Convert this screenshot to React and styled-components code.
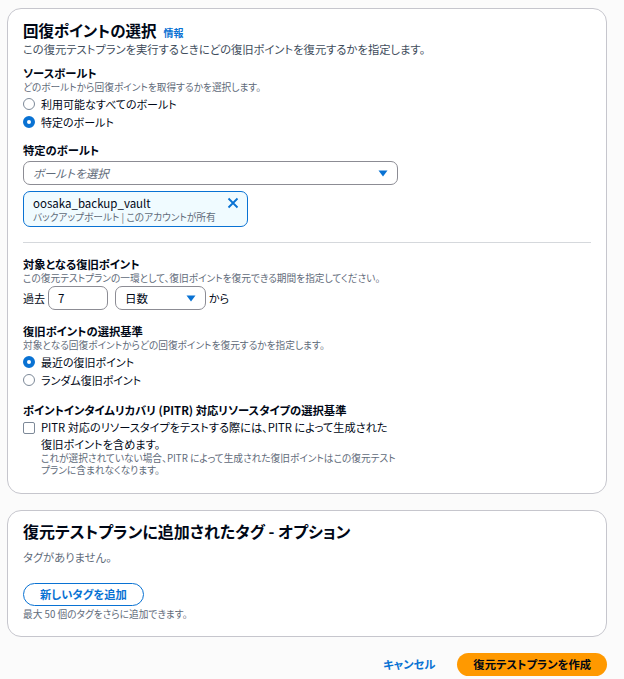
import styled, { createGlobalStyle } from "styled-components";

const GlobalStyle = createGlobalStyle`
  body {
    margin: 0;
    background: #fbfbfb;
    font-family: "Noto Sans CJK JP", "Noto Sans", sans-serif;
    font-feature-settings: "palt";
    color: #000716;
  }
`;

const Page = styled.div`
  width: 600px;
  padding: 8px 0 0 7px;
  display: flex;
  flex-direction: column;
  gap: 16px;
`;

const Card = styled.section`
  background: #fff;
  border: 1px solid #c6c6cd;
  border-radius: 14px;
  padding: ${(p) => p.$pad || "11px 15px 17px"};
  display: flex;
  flex-direction: column;
`;

const Title = styled.h2`
  margin: 0;
  font-size: ${(p) => p.$size || "15.5px"};
  line-height: ${(p) => p.$lh || "20px"};
  font-weight: 700;
  display: flex;
  align-items: baseline;
  gap: 7px;
`;

const InfoLink = styled.a`
  font-size: 10px;
  font-weight: 700;
  color: #0972d3;
`;

const Lead = styled.p`
  margin: -1px 0 0;
  font-size: 11.3px;
  line-height: 14px;
  color: #414d5c;
`;

const Label = styled.div`
  margin-top: ${(p) => p.$mt || "10px"};
  font-size: 11.3px;
  line-height: 15px;
  font-weight: 700;
`;

const Hint = styled.div`
  margin-top: ${(p) => p.$mt || "0"};
  width: ${(p) => p.$w || "auto"};
  font-size: 9.7px;
  line-height: 12px;
  color: #5f6b7a;
`;

const Options = styled.div`
  margin-top: 2px;
  display: grid;
  grid-auto-rows: 18px;
`;

const Option = styled.label`
  display: flex;
  align-items: center;
  gap: 6px;
  font-size: 11px;
  line-height: 18px;
`;

const Radio = styled.span`
  width: 12px;
  height: 12px;
  box-sizing: border-box;
  border-radius: 50%;
  border: ${(p) => (p.$on ? "4px solid #0972d3" : "1.5px solid #7d8998")};
  background: #fff;
`;

const Field = styled.div`
  box-sizing: border-box;
  width: ${(p) => p.$w};
  height: 24px;
  margin-top: ${(p) => p.$mt || "0"};
  margin-left: ${(p) => p.$ml || "0"};
  border: 1px solid #8c8c94;
  border-radius: 7px;
  padding: 0 9px;
  display: flex;
  align-items: center;
  justify-content: space-between;
  font-size: 11.5px;
  background: #fff;
`;

const Placeholder = styled.span`
  font-style: italic;
  color: #5f6b7a;
`;

const Caret = () => (
  <svg width="10" height="7" viewBox="0 0 10 7">
    <path d="M0.5 0.5h9L5 6.5z" fill="#0972d3" />
  </svg>
);

const Token = styled.div`
  box-sizing: border-box;
  width: 225px;
  margin-top: 6px;
  padding: 3px 8px 3px 9px;
  border: 1px solid #0972d3;
  border-radius: 7px;
  background: #f0fbff;
  display: flex;
  justify-content: space-between;
  align-items: flex-start;
`;

const TokenName = styled.div`
  font-size: 11.5px;
  line-height: 16px;
`;

const Divider = styled.hr`
  margin: 15px 0 0;
  border: 0;
  border-top: 1px solid #d5d8dc;
`;

const Row = styled.div`
  margin-top: 2px;
  display: flex;
  align-items: center;
  gap: 3px;
  font-size: 11px;
`;

const Check = styled.span`
  flex: none;
  margin-top: 3px;
  width: 12px;
  height: 12px;
  box-sizing: border-box;
  border: 1.5px solid #7d8998;
  border-radius: 2px;
`;

const CheckRow = styled.div`
  margin-top: 1px;
  display: flex;
  gap: 6px;
  align-items: flex-start;
`;

const CheckText = styled.div`
  font-size: 11.2px;
  line-height: 17px;
  width: 350px;
`;

const Muted = styled.p`
  margin: 7px 0 0;
  font-size: 11.3px;
  line-height: 16px;
  color: #5f6b7a;
`;

const Button = styled.button`
  box-sizing: border-box;
  height: 23px;
  border-radius: 12px;
  font-family: inherit;
  font-feature-settings: "palt";
  font-size: 11.3px;
  font-weight: 700;
  cursor: pointer;
  padding: 0 ${(p) => p.$px || "16px"};
  border: ${(p) => (p.$kind ? "0" : "1.5px solid #0972d3")};
  background: ${(p) => (p.$kind === "primary" ? "#ff9900" : "transparent")};
  color: ${(p) => (p.$kind === "primary" ? "#000716" : "#0972d3")};
`;

const Footer = styled.div`
  display: flex;
  justify-content: flex-end;
  align-items: center;
  gap: 12px;
`;

export default function App() {
  return (
    <>
      <GlobalStyle />
      <Page>
        <Card>
          <Title>
            回復ポイントの選択 <InfoLink>情報</InfoLink>
          </Title>
          <Lead>この復元テストプランを実行するときにどの復旧ポイントを復元するかを指定します。</Lead>

          <Label>ソースボールト</Label>
          <Hint>どのボールトから回復ポイントを取得するかを選択します。</Hint>
          <Options>
            <Option>
              <Radio />
              利用可能なすべてのボールト
            </Option>
            <Option>
              <Radio $on />
              特定のボールト
            </Option>
          </Options>

          <Label $mt="12px">特定のボールト</Label>
          <Field $w="375px" $mt="3px">
            <Placeholder>ボールトを選択</Placeholder>
            <Caret />
          </Field>
          <Token>
            <div>
              <TokenName>oosaka_backup_vault</TokenName>
              <Hint>バックアップボールト | このアカウントが所有</Hint>
            </div>
            <svg width="12" height="12" viewBox="0 0 12 12" style={{ marginTop: 2 }}>
              <path d="M1.5 1.5l9 9M10.5 1.5l-9 9" stroke="#0972d3" strokeWidth="1.8" />
            </svg>
          </Token>

          <Divider />

          <Label $mt="14px">対象となる復旧ポイント</Label>
          <Hint>この復元テストプランの一環として、復旧ポイントを復元できる期間を指定してください。</Hint>
          <Row>
            過去
            <Field $w="60px">7</Field>
            <Field $w="91px" $ml="4px">
              日数
              <Caret />
            </Field>
            から
          </Row>

          <Label $mt="14px">復旧ポイントの選択基準</Label>
          <Hint>対象となる回復ポイントからどの回復ポイントを復元するかを指定します。</Hint>
          <Options>
            <Option>
              <Radio $on />
              最近の復旧ポイント
            </Option>
            <Option>
              <Radio />
              ランダム復旧ポイント
            </Option>
          </Options>

          <Label $mt="14px">ポイントインタイムリカバリ (PITR) 対応リソースタイプの選択基準</Label>
          <CheckRow>
            <Check />
            <div>
              <CheckText>
                PITR 対応のリソースタイプをテストする際には、PITR によって生成された復旧ポイントを含めます。
              </CheckText>
              <Hint $mt="-1px" $w="356px">
                これが選択されていない場合、PITR によって生成された復旧ポイントはこの復元テストプランに含まれなくなります。
              </Hint>
            </div>
          </CheckRow>
        </Card>

        <Card $pad="9px 15px 16px">
          <Title $lh="22px" $size="16px">
            復元テストプランに追加されたタグ - オプション
          </Title>
          <Muted>タグがありません。</Muted>
          <div style={{ marginTop: 15 }}>
            <Button>新しいタグを追加</Button>
          </div>
          <Hint $mt="2px">最大 50 個のタグをさらに追加できます。</Hint>
        </Card>

        <Footer>
          <Button $kind="link" $px="10px">キャンセル</Button>
          <Button $kind="primary" $px="16px">
            復元テストプランを作成
          </Button>
        </Footer>
      </Page>
    </>
  );
}
